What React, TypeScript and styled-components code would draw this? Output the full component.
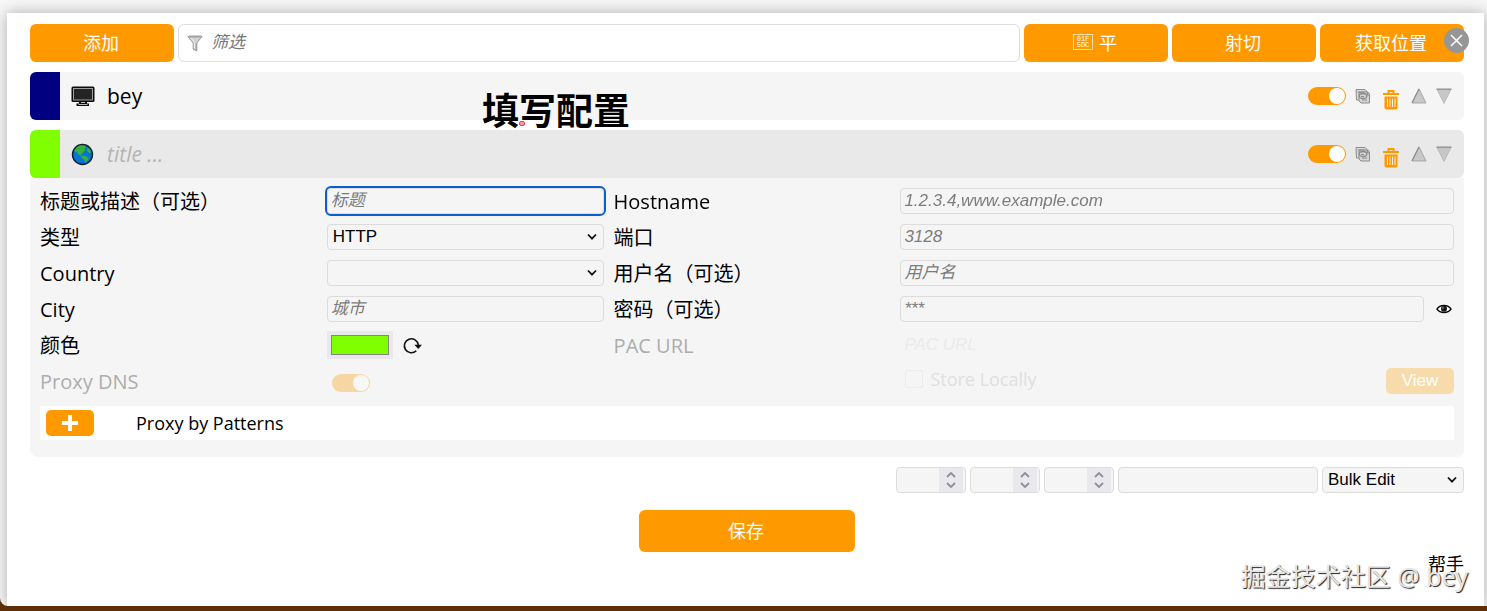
import React from "react";
import styled, { createGlobalStyle, css } from "styled-components";

const ui = `"Open Sans", "Noto Sans CJK SC", sans-serif`;
const arial = `"Liberation Sans", "Noto Sans CJK SC", sans-serif`;
const orange = "#ff9900";

const GlobalStyle = createGlobalStyle`
  *, *::before, *::after { box-sizing: border-box; }
  body { margin: 0; background: #5e2f08; font-family: ${ui}; color: #000; }
  button, input, select { font-family: ${arial}; font-size: 17px; margin: 0; }
  button { cursor: pointer; }
  svg { display: block; flex: none; }
`;

const Page = styled.div`
  min-height: 100vh;
  display: flex;
  padding-bottom: 5px;
`;

const Backdrop = styled.div`
  flex: 1;
  display: flex;
  padding: 13px 3px 0 7px;
  background: #f7f7f7;
  border-bottom-left-radius: 8px;
  overflow: hidden;
`;

const Dialog = styled.main`
  position: relative;
  flex: 1;
  min-width: 0;
  padding: 11px 20px 0 23px;
  background: #fff;
  box-shadow: 0 0 14px rgba(0, 0, 0, 0.3);
`;

const Toolbar = styled.div`
  display: flex;
  gap: 4px;
  height: 38px;
`;

const ActionButton = styled.button`
  display: flex;
  align-items: center;
  justify-content: center;
  gap: 6px;
  width: 144px;
  border: 0;
  border-radius: 6px;
  background: ${orange};
  color: #fff;
  font-family: ${ui};
  font-size: 18px;
  padding: 0 2px 2px 0;
`;

const CodeBox = styled.span`
  display: grid;
  align-content: center;
  justify-items: center;
  width: 20px;
  height: 16px;
  border: 1px solid #ffe0b0;
  font: 400 7px/6px "Liberation Mono", monospace;
`;

const FilterBox = styled.label`
  flex: 1;
  min-width: 0;
  display: flex;
  align-items: center;
  gap: 8px;
  padding: 0 8px;
  border: 1px solid #ddd;
  border-radius: 6px;
  background: #fff;
`;

const FilterInput = styled.input`
  flex: 1;
  min-width: 0;
  border: 0;
  outline: 0;
  padding: 0;
  background: transparent;
  &::placeholder { color: #777; font-style: italic; }
`;

const ProxyHeader = styled.header<{ $active?: boolean }>`
  display: flex;
  align-items: center;
  height: 48px;
  margin-top: 10px;
  padding-right: 12px;
  border-radius: 6px;
  overflow: hidden;
  background: ${(p) => (p.$active ? "#e9e9e9" : "#f5f5f5")};
`;

const Swatch = styled.span<{ $color: string }>`
  width: 30px;
  height: 100%;
  margin-right: 11px;
  background: ${(p) => p.$color};
`;

const ProxyTitle = styled.span<{ $empty?: boolean }>`
  flex: 1;
  margin-left: 12px;
  font-size: 21px;
  ${(p) => p.$empty && css`
    color: #b4b4b4;
    font-style: italic;
  `}
`;

const Switch = styled.input`
  appearance: none;
  width: 38px;
  height: 18px;
  padding: 1px;
  border-radius: 9px;
  background: ${orange};
  display: flex;
  justify-content: flex-end;
  &::before {
    content: "";
    width: 16px;
    height: 16px;
    border-radius: 50%;
    background: #fff;
  }
  &:disabled { opacity: 0.33; }
`;

const IconButton = styled.button`
  display: grid;
  place-items: center;
  border: 0;
  padding: 0;
  background: none;
`;

const RowActions = styled.div`
  display: grid;
  grid-template-columns: 38px 16px 22px 16px 16px;
  column-gap: 10px;
  align-items: center;
  column-gap: 9px;
`;

const Trash = styled(IconButton)`
  padding-top: 8px;
`;

const Details = styled.section`
  padding: 10px 10px 17px;
  border-radius: 0 0 8px 8px;
  background: #f5f5f5;
`;

const Fields = styled.div`
  display: grid;
  grid-template-columns: 1fr 1fr 1fr 2fr;
  grid-auto-rows: 26px;
  gap: 10px;
  align-items: center;
`;

const Label = styled.label<{ $muted?: boolean }>`
  padding-top: 2px;
  font-size: 20px;
  line-height: 26px;
  white-space: nowrap;
  color: ${(p) => (p.$muted ? "#adadad" : "#000")};
`;

const TextInput = styled.input`
  width: 100%;
  min-width: 0;
  height: 26px;
  padding: 0 3px;
  border: 1px solid #dcdcdc;
  border-radius: 4px;
  background: #f5f5f5;
  &::placeholder { color: #7c7c7c; font-style: italic; }
  &:focus { outline: 2px solid #0a60c9; outline-offset: 0; }
  &:disabled { border-color: transparent; }
  &:disabled::placeholder { color: #ebebeb; }
`;

const SelectWrap = styled.div<{ $width?: string }>`
  position: relative;
  width: ${(p) => p.$width || "100%"};
  svg { position: absolute; right: 7px; top: 9px; pointer-events: none; }
`;

const Select = styled.select`
  appearance: none;
  width: 100%;
  height: 26px;
  padding: 0 24px 1px 5px;
  border: 1px solid #dcdcdc;
  border-radius: 4px;
  background: #f5f5f5;
  color: #000;
`;

const Inline = styled.div<{ $gap: number }>`
  display: flex;
  align-items: center;
  gap: ${(p) => p.$gap}px;
`;

const PasswordRow = styled(Inline)`
  padding-right: 2px;
`;

const ColorInput = styled.input`
  appearance: none;
  width: 66px;
  height: 28px;
  padding: 4px;
  border: 0;
  background: #e9e9ed;
  &::-webkit-color-swatch-wrapper { padding: 0; }
  &::-webkit-color-swatch { border: 1px solid #848484; border-radius: 0; }
`;

const SwitchCell = styled.div`
  padding: 4px 0 0 5px;
`;

const StoreRow = styled.div`
  display: flex;
  align-items: center;
  justify-content: space-between;
`;

const StoreLabel = styled.label`
  display: flex;
  align-items: center;
  gap: 7px;
  padding: 0 0 4px 5px;
  font-size: 18px;
  color: #dfdfdf;
`;

const Tick = styled.input`
  appearance: none;
  width: 18px;
  height: 18px;
  border: 1px solid #ececec;
  border-radius: 2px;
`;

const ViewButton = styled.button`
  width: 68px;
  height: 26px;
  padding: 0;
  border: 0;
  border-radius: 5px;
  background: #f8dbab;
  color: #fff;
`;

const Patterns = styled.div`
  display: flex;
  align-items: center;
  gap: 42px;
  height: 34px;
  margin-top: 12px;
  padding: 0 6px;
  background: #fff;
  font-size: 18px;
`;

const AddPattern = styled.button`
  display: grid;
  place-items: center;
  width: 48px;
  height: 26px;
  padding: 0;
  border: 0;
  border-radius: 5px;
  background: ${orange};
`;

const BulkRow = styled.div`
  display: flex;
  justify-content: flex-end;
  gap: 4px;
  margin-top: 10px;
`;

const NumberBox = styled.div`
  display: flex;
  width: 70px;
  height: 26px;
  padding-right: 2px;
  border: 1px solid #dcdcdc;
  border-radius: 4px;
  overflow: hidden;
  background: #f5f5f5;
`;

const NumberInput = styled.input`
  appearance: textfield;
  flex: 1;
  min-width: 0;
  border: 0;
  background: transparent;
  &::-webkit-inner-spin-button { display: none; }
`;

const Spinner = styled.div`
  display: grid;
  place-items: center;
  width: 24px;
  background: #e9e9ed;
`;

const BulkText = styled(TextInput)`
  width: 200px;
`;

const SaveButton = styled(ActionButton)`
  width: 216px;
  height: 42px;
  margin: 17px auto 0;
`;

const Footer = styled.footer`
  display: flex;
  justify-content: flex-end;
  a {
    color: #000;
    text-decoration: none;
    font-size: 18px;
    line-height: 24px;
  }
`;

const Caption = styled.h1`
  position: absolute;
  left: 475px;
  top: 74px;
  margin: 0;
  font-size: 37px;
  line-height: 48px;
  white-space: nowrap;
  &::after {
    content: "";
    position: absolute;
    left: 37px;
    top: 34px;
    width: 6px;
    height: 5px;
    border: 1px solid #f04450;
    border-radius: 2px;
    background: #ff9aa2;
  }
`;

const CloseButton = styled.button`
  position: absolute;
  right: 15px;
  top: 15px;
  display: grid;
  place-items: center;
  width: 25px;
  height: 25px;
  padding: 0;
  border: 0;
  border-radius: 50%;
  background: #969696;
`;

const Watermark = styled.div`
  position: absolute;
  right: 16px;
  bottom: 12px;
  font-family: "Noto Sans", "Noto Sans CJK SC", sans-serif;
  font-size: 25px;
  line-height: 36px;
  white-space: nowrap;
  color: #e6e6e6;
  text-shadow: 1px 1px 1px #222;
`;

const Chevron = () => (
  <svg width="10" height="8" viewBox="0 0 10 8" fill="none" stroke="#111" strokeWidth="1.8">
    <path d="M1 1.5 5 5.7 9 1.5" />
  </svg>
);

const Funnel = () => (
  <svg width="16" height="18" viewBox="0 0 16 18">
    <path d="M1 2.5 6.2 9v6.2l3.6 1.7V9L15 2.5Z" fill="#d2d2d2" stroke="#9a9a9a" strokeLinejoin="round" />
    <path d="M1.5 2.5h13" stroke="#a2a2a2" strokeWidth="2" />
    <path d="M4 4.2 7.6 8.5V14" stroke="#f3f3f3" fill="none" />
    <path d="M9.2 9v7" stroke="#989898" />
  </svg>
);

const Monitor = () => (
  <svg width="24" height="20" viewBox="0 0 24 20">
    <rect x="0.500" y="0.500" width="23" height="15.500" rx="1.500" fill="#0c0c0c" />
    <rect x="2.500" y="2.500" width="19" height="11.500" fill="#222524" stroke="#a39a9a" />
    <path d="M8 16h8v1.500h2V20H5.500v-2.500H8Z" fill="#0c0c0c" />
    <path d="M7.500 18.500h9M10 16.500h4" stroke="#bbb" />
  </svg>
);

const Globe = () => (
  <svg width="24" height="24" viewBox="0 0 24 24">
    <circle cx="11.500" cy="12.500" r="10" fill="#0873d2" stroke="#10202b" strokeWidth="1.400" />
    <path d="M6 5 9 3.200l5 .2 1 2-1.700 1.700 1.400 1.500-2.200 1-1.500 2.400-1.600.2 1.600 2.300-3.200-1.800-2.500-3L3 9Z" fill="#35b23a" />
    <path d="m10.500 13.600 4.200.4 3.200 2.200-1.400 2.400-2.100 2.600-1-3.300-2.700-2Z" fill="#35b23a" />
    <path d="m16.500 5.500 2 1.500 1.800 3.400-2 .6-2.200-2Z" fill="#35b23a" />
  </svg>
);

const Copy = () => (
  <svg width="16" height="16" viewBox="0 0 16 16" fill="none" stroke="#8c8c8c">
    <path d="M1 1.500h9l1.500 1.500v9H1.500Z" fill="#ddd" />
    <path d="M4 4h9l1.500 2v9H6l-2-2Z" fill="#d4d4d4" />
    <path d="M2.500 4h7M12.500 4v3h2" />
    <ellipse cx="8" cy="8" rx="3.800" ry="2.500" strokeWidth="1.300" />
    <path d="M6 8.500h3M7 12h5" />
  </svg>
);

const TrashIcon = () => (
  <svg width="16" height="20" viewBox="0 0 16 20" fill="none">
    <path d="M5.500 3V1h5v2M0 4h16" stroke={orange} strokeWidth="2" />
    <path d="M1.500 6.500h13v11a2 2 0 0 1-2 2h-9a2 2 0 0 1-2-2Z" fill={orange} />
    <path d="M4.500 8.500V17M7 8.500V17M9.500 8.500V17M12 8.500V17" stroke="#fff1dc" />
  </svg>
);

const Triangle = ({ down }: { down?: boolean }) => (
  <svg width="16" height="16" viewBox="0 0 16 16">
    {down ? (
      <>
        <path d="M1 1.500h14L8 15.500Z" fill="#c7c7c7" stroke="#b5b5b5" strokeWidth=".8" />
        <path d="M.5 1.200h15" stroke="#8d8d8d" strokeWidth="1.300" />
      </>
    ) : (
      <>
        <path d="M8 .8 15 15H1Z" fill="#c8c8c8" stroke="#999" strokeWidth=".8" />
        <path d="M8 1 1 14.800" stroke="#8d8d8d" strokeWidth="1.200" />
      </>
    )}
  </svg>
);

const Reload = () => (
  <svg width="20" height="20" viewBox="0 0 20 20">
    <path d="M14.300 15.700A7 7 0 1 1 16.300 10" fill="none" stroke="#111" strokeWidth="1.600" />
    <path d="M12.400 9.700H20l-3.800 4.300Z" fill="#111" />
  </svg>
);

const Eye = () => (
  <svg width="16" height="10" viewBox="0 0 16 10">
    <path d="M1 5.200C4 .3 12 .3 15 5.200 12 9.700 4 9.700 1 5.200Z" fill="#fff" stroke="#080808" strokeWidth="1.500" />
    <circle cx="8" cy="4.800" r="3" fill="#161616" />
    <path d="M7 2.800v2" stroke="#aaa" />
  </svg>
);

const SpinArrows = () => (
  <svg width="12" height="18" viewBox="0 0 12 18" fill="none" stroke="#8f8f96" strokeWidth="1.800">
    <path d="M2 6 6 2l4 4M2 12l4 4 4-4" />
  </svg>
);

function ProxyActions({ name }: { name: string }) {
  return (
    <RowActions>
      <Switch type="checkbox" defaultChecked aria-label={`Enable ${name}`} />
      <IconButton aria-label={`Duplicate ${name}`}><Copy /></IconButton>
      <Trash aria-label={`Delete ${name}`}><TrashIcon /></Trash>
      <IconButton aria-label={`Move ${name} up`}><Triangle /></IconButton>
      <IconButton aria-label={`Move ${name} down`}><Triangle down /></IconButton>
    </RowActions>
  );
}

function NumberField({ label }: { label: string }) {
  return (
    <NumberBox>
      <NumberInput type="number" aria-label={label} />
      <Spinner><SpinArrows /></Spinner>
    </NumberBox>
  );
}

export default function App() {
  return (
    <>
      <GlobalStyle />
      <Page>
        <Backdrop>
          <Dialog>
            <Toolbar>
              <ActionButton>添加</ActionButton>
              <FilterBox>
                <Funnel />
                <FilterInput type="text" placeholder="筛选" aria-label="筛选" />
              </FilterBox>
              <ActionButton>
                <CodeBox><span>01F</span><span>5DC</span></CodeBox>
                平
              </ActionButton>
              <ActionButton>射切</ActionButton>
              <ActionButton>获取位置</ActionButton>
            </Toolbar>

            <ProxyHeader>
              <Swatch $color="#000080" />
              <Monitor />
              <ProxyTitle>bey</ProxyTitle>
              <ProxyActions name="bey" />
            </ProxyHeader>

            <ProxyHeader $active>
              <Swatch $color="#7fff00" />
              <Globe />
              <ProxyTitle $empty>title ...</ProxyTitle>
              <ProxyActions name="proxy" />
            </ProxyHeader>

            <Details>
              <Fields>
                <Label htmlFor="title">标题或描述（可选）</Label>
                <TextInput id="title" placeholder="标题" autoFocus />
                <Label htmlFor="host">Hostname</Label>
                <TextInput id="host" placeholder="1.2.3.4,www.example.com" />

                <Label htmlFor="type">类型</Label>
                <SelectWrap>
                  <Select id="type"><option>HTTP</option></Select>
                  <Chevron />
                </SelectWrap>
                <Label htmlFor="port">端口</Label>
                <TextInput id="port" placeholder="3128" />

                <Label htmlFor="country">Country</Label>
                <SelectWrap>
                  <Select id="country"><option></option></Select>
                  <Chevron />
                </SelectWrap>
                <Label htmlFor="user">用户名（可选）</Label>
                <TextInput id="user" placeholder="用户名" />

                <Label htmlFor="city">City</Label>
                <TextInput id="city" placeholder="城市" />
                <Label htmlFor="password">密码（可选）</Label>
                <PasswordRow $gap={12}>
                  <TextInput id="password" type="password" placeholder="***" />
                  <IconButton aria-label="Show password"><Eye /></IconButton>
                </PasswordRow>

                <Label htmlFor="color">颜色</Label>
                <Inline $gap={9}>
                  <ColorInput id="color" type="color" defaultValue="#7fff00" />
                  <IconButton aria-label="Random color"><Reload /></IconButton>
                </Inline>
                <Label htmlFor="pac" $muted>PAC URL</Label>
                <TextInput id="pac" placeholder="PAC URL" disabled />

                <Label htmlFor="dns" $muted>Proxy DNS</Label>
                <SwitchCell>
                  <Switch id="dns" type="checkbox" defaultChecked disabled />
                </SwitchCell>
                <span />
                <StoreRow>
                  <StoreLabel><Tick type="checkbox" disabled />Store Locally</StoreLabel>
                  <ViewButton disabled>View</ViewButton>
                </StoreRow>
              </Fields>
              <Patterns>
                <AddPattern aria-label="Add pattern">
                  <svg width="16" height="16" viewBox="0 0 16 16" stroke="#fff" strokeWidth="4">
                    <path d="M8 0v16M0 8h16" />
                  </svg>
                </AddPattern>
                <span>Proxy by Patterns</span>
              </Patterns>
            </Details>

            <BulkRow>
              <NumberField label="From" />
              <NumberField label="To" />
              <NumberField label="Target" />
              <BulkText aria-label="Bulk value" />
              <SelectWrap $width="142px">
                <Select aria-label="Bulk Edit"><option>Bulk Edit</option></Select>
                <Chevron />
              </SelectWrap>
            </BulkRow>

            <SaveButton>保存</SaveButton>
            <Footer><a href="#help">帮手</a></Footer>

            <Caption>填写配置</Caption>
            <CloseButton aria-label="Close">
              <svg width="13" height="13" viewBox="0 0 13 13" stroke="#fff" strokeWidth="1.500">
                <path d="m1 1 11 11M12 1 1 12" />
              </svg>
            </CloseButton>
            <Watermark>掘金技术社区 @ bey</Watermark>
          </Dialog>
        </Backdrop>
      </Page>
    </>
  );
}
